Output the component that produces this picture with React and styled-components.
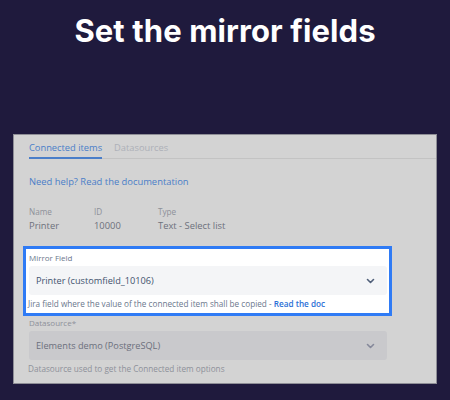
import React from 'react'
import styled, { createGlobalStyle } from 'styled-components'

const GlobalStyle = createGlobalStyle`
  html, body { margin: 0; padding: 0; }
  body { background: #1f1a3d; }
`

const Page = styled.div`
  width: 450px;
  height: 400px;
  background: #1f1a3d;
  overflow: hidden;
  font-family: "Open Sans", "Noto Sans", sans-serif;
`

const Title = styled.h1`
  margin: 0;
  padding-top: 14px;
  font-family: Inter, "Noto Sans", sans-serif;
  font-weight: 700;
  font-size: 31px;
  line-height: 34px;
  letter-spacing: 0.1px;
  color: #ffffff;
  text-align: center;
`

const Panel = styled.div`
  box-sizing: border-box;
  margin: 86px 0 0 13px;
  width: 424px;
  height: 250px;
  background: #d3d3d3;
  border: 1px solid #8e8e96;
  padding-left: 15px;
`

const TabBar = styled.div`
  display: flex;
  gap: 12px;
  border-bottom: 1px solid #c3c3c3;
`

const Tab = styled.div`
  padding: 6px 0 2px;
  font-size: 9.3px;
  line-height: 14px;
  color: ${p => (p.$active ? '#4a7ec9' : '#adb0b8')};
  border-bottom: 2px solid ${p => (p.$active ? '#4a7ec9' : 'transparent')};
  margin-bottom: -1px;
`

const HelpLink = styled.div`
  margin-top: 16px;
  font-size: 9.4px;
  line-height: 14px;
  color: #4b7ec8;
`

const Meta = styled.div`
  margin-top: 16px;
  display: grid;
  grid-template-columns: 65px 64px auto;
`

const MetaLabel = styled.div`
  font-size: 8.2px;
  line-height: 13px;
  color: #8d9099;
`

const MetaValue = styled.div`
  font-size: 9.4px;
  line-height: 15px;
  color: #6d717c;
`

const Highlight = styled.div`
  box-sizing: border-box;
  margin: 13px 0 0 -6px;
  width: 369px;
  height: 70px;
  border: 3px solid #2f7bf5;
  background: #ffffff;
  padding: 3px 0 0 3px;
`

const FieldLabel = styled.div`
  font-size: 8px;
  line-height: 12px;
  color: ${p => (p.$dim ? '#8e919a' : '#6b778c')};
  margin-top: ${p => p.$top || 0}px;
`

const Select = styled.div`
  box-sizing: border-box;
  margin-top: 2px;
  width: 358px;
  height: 29px;
  border-radius: 3px;
  background: ${p => (p.$dim ? '#c9c9cc' : '#f4f5f7')};
  display: flex;
  align-items: center;
  justify-content: space-between;
  padding: 0 12px 0 7px;
  font-size: 9.2px;
  color: ${p => (p.$dim ? '#6b6f7c' : '#42526e')};
  svg { color: ${p => (p.$dim ? '#85889a' : '#505f79')}; }
`

const Helper = styled.div`
  margin-top: 3px;
  margin-left: -1px;
  font-size: 8.2px;
  line-height: 12px;
  color: ${p => (p.$dim ? '#8e919a' : '#6b778c')};
  white-space: nowrap;
  a {
    color: #2c6fd6;
    font-weight: 600;
    text-decoration: none;
  }
`

const Chevron = () => (
  <svg width="9" height="6" viewBox="0 0 9 6">
    <path d="M1.5 1.5 L4.5 4.5 L7.5 1.5" fill="none" stroke="currentColor" strokeWidth="1.6" strokeLinecap="round" strokeLinejoin="round" />
  </svg>
)

export default function App() {
  return (
    <Page>
      <GlobalStyle />
      <Title>Set the mirror fields</Title>
      <Panel>
        <TabBar>
          <Tab $active>Connected items</Tab>
          <Tab>Datasources</Tab>
        </TabBar>
        <HelpLink>Need help? Read the documentation</HelpLink>
        <Meta>
          <MetaLabel>Name</MetaLabel>
          <MetaLabel>ID</MetaLabel>
          <MetaLabel>Type</MetaLabel>
          <MetaValue>Printer</MetaValue>
          <MetaValue>10000</MetaValue>
          <MetaValue>Text - Select list</MetaValue>
        </Meta>
        <Highlight>
          <FieldLabel>Mirror Field</FieldLabel>
          <Select>
            <span>Printer (customfield_10106)</span>
            <Chevron />
          </Select>
          <Helper>
            Jira field where the value of the connected item shall be copied - <a href="#doc">Read the doc</a>
          </Helper>
        </Highlight>
        <FieldLabel $dim $top={1}>Datasource*</FieldLabel>
        <Select $dim>
          <span>Elements demo (PostgreSQL)</span>
          <Chevron />
        </Select>
        <Helper $dim>Datasource used to get the Connected item options</Helper>
      </Panel>
    </Page>
  )
}
